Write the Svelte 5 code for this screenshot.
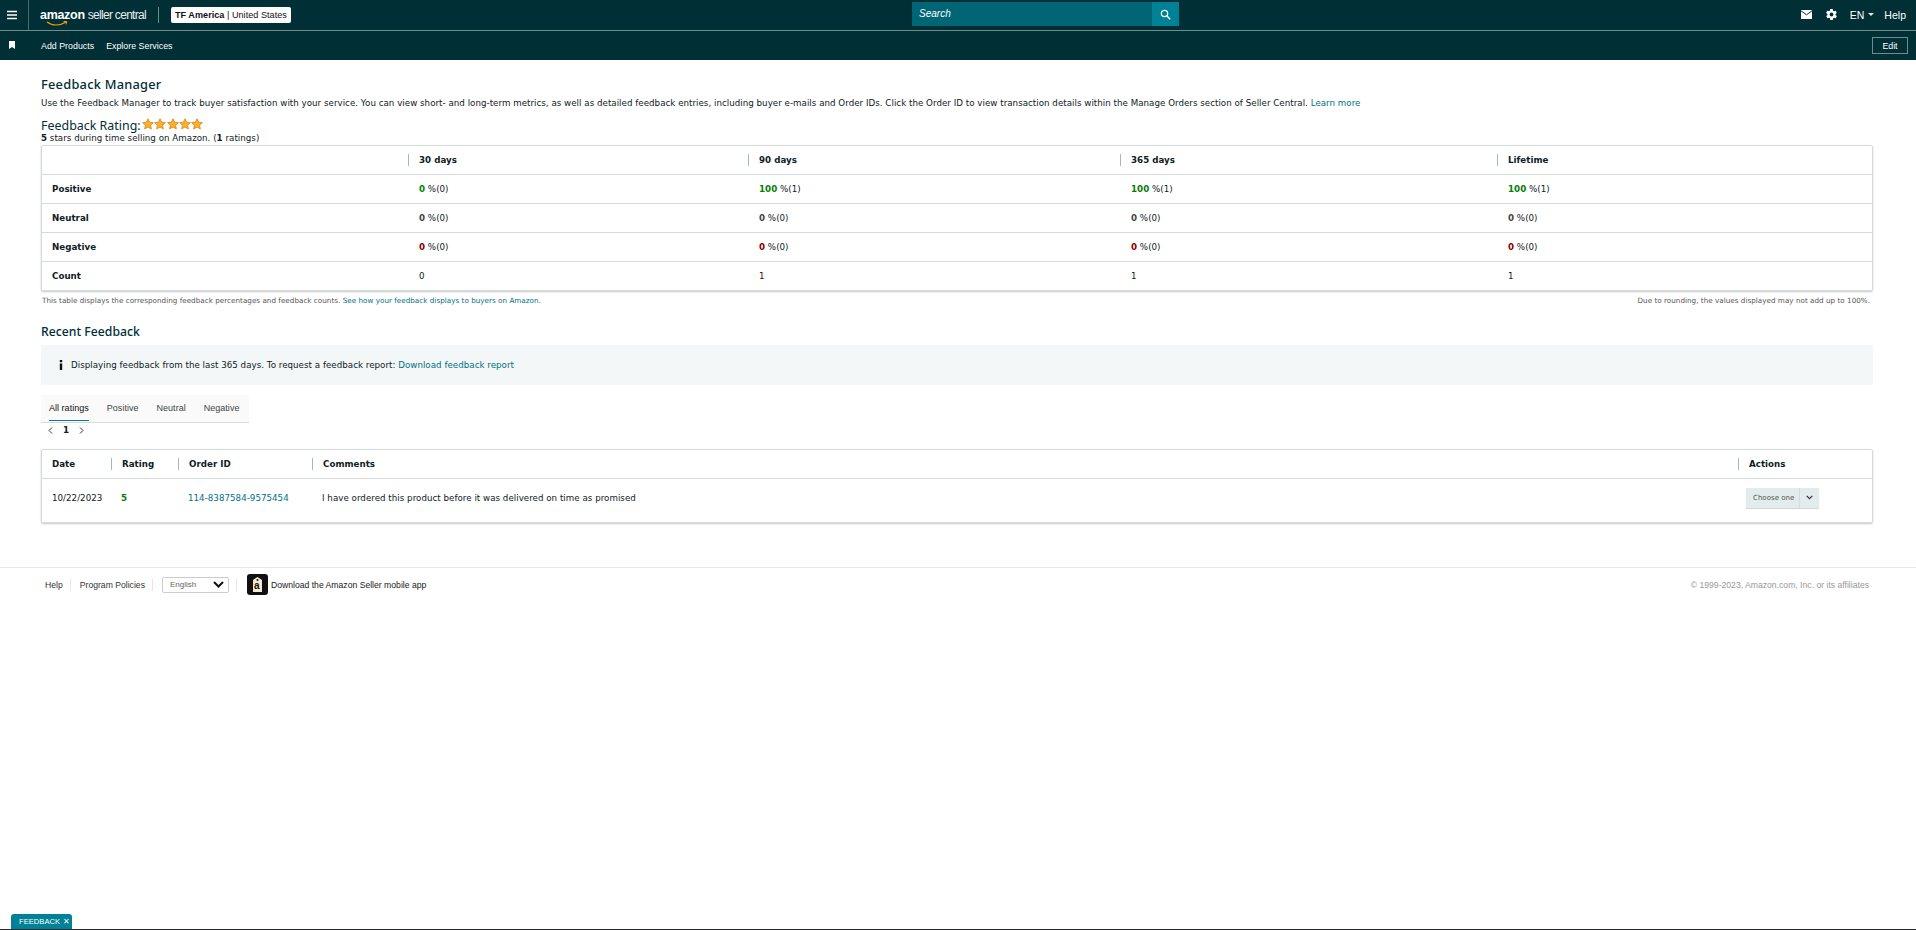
<script lang="ts">
  const summaryCols = ["30 days", "90 days", "365 days", "Lifetime"]
  const summaryRows = [
    { label: "Positive", tone: "good", values: [[0, 0], [100, 1], [100, 1], [100, 1]] },
    { label: "Neutral", tone: "flat", values: [[0, 0], [0, 0], [0, 0], [0, 0]] },
    { label: "Negative", tone: "bad", values: [[0, 0], [0, 0], [0, 0], [0, 0]] },
  ]
  const counts = [0, 1, 1, 1]
  const tabs = ["All ratings", "Positive", "Neutral", "Negative"]
</script>

<div class="page">
  <header class="nav">
    <div class="nav-top">
      <button class="burger" aria-label="menu">
        <svg width="12" height="10" viewBox="0 0 12 10"><path d="M1 1.500h10M1 5h10M1 8.500h10" stroke="#fff" stroke-width="1.300" /></svg>
      </button>
      <div class="logo">
        <span class="logo-a">amazon</span><span class="logo-b">seller central</span>
        <svg class="smile" width="22" height="6" viewBox="0 0 22 6"><path d="M1 1c5 4 13 4 19 0" fill="none" stroke="#f90" stroke-width="1.200" /><path d="M17.500 .6l3.300-.2-.8 3" fill="none" stroke="#f90" stroke-width="1" /></svg>
      </div>
      <span class="nav-sep"></span>
      <div class="account"><b>TF America</b> | United States</div>
      <div class="search">
        <span class="search-text">Search</span>
        <span class="search-btn">
          <svg width="11" height="11" viewBox="0 0 11 11"><circle cx="4.500" cy="4.500" r="3.200" fill="none" stroke="#fff" stroke-width="1.200" /><path d="M7 7l3.200 3.200" stroke="#fff" stroke-width="1.500" /></svg>
        </span>
      </div>
      <div class="nav-right">
        <svg width="11" height="9" viewBox="0 0 11 9"><path d="M0 0h11v9H0z" fill="#fff" /><path d="M0 .8l5.500 4 5.500-4" fill="none" stroke="#002f36" stroke-width="1" /></svg>
        <svg class="gear" width="13" height="13" viewBox="0 0 24 24"><path fill="#fff" d="M19.400 13c.1-.3.100-.7.100-1s0-.7-.1-1l2.100-1.600c.2-.2.200-.4.100-.6l-2-3.500c-.1-.2-.4-.3-.6-.2l-2.500 1c-.5-.4-1.100-.7-1.700-1l-.4-2.600c0-.3-.2-.5-.5-.5h-4c-.3 0-.5.200-.5.500l-.4 2.600c-.6.300-1.200.6-1.700 1l-2.500-1c-.2-.1-.5 0-.6.200l-2 3.500c-.1.200-.1.500.1.600L4.600 11c-.1.300-.1.700-.1 1s0 .7.100 1l-2.100 1.600c-.2.200-.2.400-.1.600l2 3.500c.1.200.4.300.6.200l2.500-1c.5.400 1.100.7 1.700 1l.4 2.600c0 .3.200.5.500.5h4c.3 0 .5-.2.500-.5l.4-2.600c.6-.3 1.200-.6 1.700-1l2.500 1c.2.100.5 0 .6-.2l2-3.500c.1-.2.100-.5-.1-.6zM12 15.500a3.500 3.500 0 1 1 0-7 3.500 3.500 0 0 1 0 7z" /></svg>
        <span class="lang">EN<i class="caret"></i></span>
        <span class="help">Help</span>
      </div>
    </div>
    <div class="nav-bottom">
      <svg class="bookmark" width="6" height="8" viewBox="0 0 6 8"><path d="M0 0h6v8L3 6 0 8z" fill="#fff" /></svg>
      <a class="nav-link first">Add Products</a>
      <a class="nav-link">Explore Services</a>
      <button class="edit">Edit</button>
    </div>
  </header>

  <main class="main">
    <h1>Feedback Manager</h1>
    <p class="intro">Use the Feedback Manager to track buyer satisfaction with your service. You can view short- and long-term metrics, as well as detailed feedback entries, including buyer e-mails and Order IDs. Click the Order ID to view transaction details within the Manage Orders section of Seller Central. <a>Learn more</a></p>
    <div class="rating-line">
      <span class="rating-title">Feedback Rating:</span>
      <span class="stars">
        {#each [1, 2, 3, 4, 5] as s (s)}
          <svg width="12" height="12" viewBox="0 0 24 24"><path fill="#f5b32a" stroke="#e47911" stroke-width="1.500" d="M12 1.500l3.200 6.900 7.500.9-5.500 5.100 1.500 7.400L12 18.100l-6.700 3.700 1.500-7.400L1.300 9.300l7.500-.9z" /></svg>
        {/each}
      </span>
    </div>
    <p class="rating-sub"><b>5</b> stars during time selling on Amazon. (<b>1</b> ratings)</p>

    <div class="card summary">
      <div class="row head">
        <div></div>
        {#each summaryCols as c (c)}
          <div class="cell"><span class="th">{c}</span></div>
        {/each}
      </div>
      {#each summaryRows as r (r.label)}
        <div class="row">
          <div class="row-label">{r.label}</div>
          {#each r.values as v, i (i)}
            <div class="cell"><b class={r.tone}>{v[0]}</b> %({v[1]})</div>
          {/each}
        </div>
      {/each}
      <div class="row">
        <div class="row-label">Count</div>
        {#each counts as c, i (i)}
          <div class="cell">{c}</div>
        {/each}
      </div>
    </div>
    <div class="notes">
      <span>This table displays the corresponding feedback percentages and feedback counts. <a>See how your feedback displays to buyers on Amazon.</a></span>
      <span>Due to rounding, the values displayed may not add up to 100%.</span>
    </div>

    <h2>Recent Feedback</h2>
    <div class="alert">
      <svg width="4" height="10" viewBox="0 0 4 10"><path d="M.8 0h2.400v2.200H.8zM.8 3.500h2.400V10H.8z" fill="#0f1111" /></svg>
      <span>Displaying feedback from the last 365 days. To request a feedback report: <a>Download feedback report</a></span>
    </div>

    <div class="tabs">
      {#each tabs as t, i (t)}
        <span class="tab" class:active={i === 0}>{t}</span>
      {/each}
    </div>
    <div class="pager">
      <svg width="5" height="7" viewBox="0 0 5 7"><path d="M4 .5L1 3.500l3 3" fill="none" stroke="#333" /></svg>
      <span>1</span>
      <svg width="5" height="7" viewBox="0 0 5 7"><path d="M1 .5l3 3-3 3" fill="none" stroke="#333" /></svg>
    </div>

    <div class="card recent">
      <div class="rrow rhead">
        <div class="rcell first">Date</div>
        <div class="rcell"><span class="th">Rating</span></div>
        <div class="rcell"><span class="th">Order ID</span></div>
        <div class="rcell"><span class="th">Comments</span></div>
        <div class="rcell"><span class="th">Actions</span></div>
      </div>
      <div class="rrow rbody">
        <div class="rcell first">10/22/2023</div>
        <div class="rcell"><b class="good score">5</b></div>
        <div class="rcell"><a>114-8387584-9575454</a></div>
        <div class="rcell">I have ordered this product before it was delivered on time as promised</div>
        <div class="rcell">
          <div class="choose">
            <span class="choose-text">Choose one</span>
            <span class="choose-arrow">
              <svg width="7" height="5" viewBox="0 0 7 5"><path d="M.7 .8l2.800 2.800L6.300 .8" fill="none" stroke="#333" stroke-width="1.200" /></svg>
            </span>
          </div>
        </div>
      </div>
    </div>
  </main>

  <footer class="footer">
    <div class="foot-left">
      <a class="foot-link">Help</a>
      <a class="foot-link">Program Policies</a>
      <div class="lang-select">
        <span>English</span>
        <svg width="11" height="7" viewBox="0 0 11 7"><path d="M1 1l4.500 4.500L10 1" fill="none" stroke="#111" stroke-width="2" /></svg>
      </div>
      <span class="foot-sep"></span>
      <div class="app-icon">
        <svg width="21" height="21" viewBox="0 0 21 21"><rect width="21" height="21" rx="3" fill="#111" /><path d="M6 6l4.500-3L15 6v12H6z" fill="#f4ead0" /><circle cx="10.500" cy="6" r="1" fill="#111" /></svg>
        <span class="app-a">a</span>
      </div>
      <span class="app-text">Download the Amazon Seller mobile app</span>
    </div>
    <span class="copy">© 1999-2023, Amazon.com, Inc. or its affiliates</span>
  </footer>

  <div class="feedback-tab">FEEDBACK <span class="x">✕</span></div>
  <div class="bottom-line"></div>
</div>

<style>
  :global(body) {
    margin: 0;
    background: #fff;
  }
  .page {
    min-height: 930px;
    font-family: "DejaVu Sans", sans-serif;
    font-size: 8.7px;
    letter-spacing: 0.025px;
    color: #0f2024;
    overflow: hidden;
  }
  a {
    color: #007185;
    cursor: pointer;
  }
  b {
    font-weight: 700;
  }

  .nav {
    background: #002f36;
    color: #fff;
    font-family: "Liberation Sans", sans-serif;
  }
  .nav-top {
    height: 31px;
    box-sizing: border-box;
    display: flex;
    align-items: center;
    border-bottom: 1px solid #6f8b8b;
    padding-bottom: 1px;
    position: relative;
  }
  .burger {
    width: 29px;
    height: 30px;
    padding: 0 4px 0 0;
    box-sizing: border-box;
    background: none;
    border: 0;
    border-right: 1px solid #4a6a6e;
    display: flex;
    align-items: center;
    justify-content: center;
    flex: none;
  }
  .logo {
    margin-left: 11px;
    position: relative;
    display: flex;
    align-items: baseline;
    gap: 3px;
    white-space: nowrap;
  }
  .logo-a {
    font-size: 12.5px;
    font-weight: 700;
    letter-spacing: -0.3px;
  }
  .logo-b {
    font-size: 12px;
    letter-spacing: -0.7px;
    color: #e6eded;
  }
  .smile {
    position: absolute;
    left: 6px;
    top: 13px;
  }
  .nav-sep {
    width: 1px;
    height: 16px;
    background: #6f8b8b;
    margin: 0 12px;
  }
  .account {
    background: #fff;
    color: #111;
    border-radius: 2px;
    height: 16px;
    line-height: 16px;
    padding: 0 4px;
    font-size: 9.1px;
    white-space: nowrap;
  }
  .search {
    position: absolute;
    left: 912px;
    top: 2px;
    width: 267px;
    height: 24px;
    background: #006574;
    display: flex;
    justify-content: space-between;
    align-items: center;
    font-size: 10px;
    font-style: italic;
  }
  .search-text {
    padding: 0 0 2px 7px;
  }
  .search-btn {
    width: 27px;
    height: 24px;
    background: #008296;
    display: flex;
    align-items: center;
    justify-content: center;
  }
  .nav-right {
    margin-left: auto;
    display: flex;
    align-items: center;
    padding-right: 10px;
    font-size: 10.5px;
  }
  .gear {
    margin-left: 13px;
  }
  .lang {
    margin-left: 12px;
    display: flex;
    align-items: center;
  }
  .caret {
    width: 0;
    height: 0;
    border: 3px solid transparent;
    border-top: 3px solid #dfe6e6;
    border-bottom: 0;
    margin-left: 4px;
  }
  .help {
    margin-left: 10px;
  }
  .nav-bottom {
    height: 29px;
    box-sizing: border-box;
    display: flex;
    align-items: center;
    padding: 1px 8px 0 9px;
    font-size: 8.8px;
  }
  .bookmark {
    margin-top: -2px;
  }
  .nav-link {
    color: #fff;
    margin-right: 12px;
  }
  .nav-link.first {
    margin-left: 26px;
  }
  .edit {
    margin-left: auto;
    width: 36px;
    height: 17px;
    padding: 0;
    margin-top: -1px;
    background: none;
    border: 1px solid #6f8b8b;
    color: #fff;
    font: inherit;
  }

  .main {
    padding: 15px 43px 0 41px;
  }
  h1 {
    margin: 0;
    font-family: "Noto Sans", sans-serif;
    font-size: 12.8px;
    line-height: 19px;
    font-weight: 500;
    color: #002f36;
    letter-spacing: 0.25px;
  }
  .intro {
    margin: 2px 0 0;
    line-height: 14px;
    white-space: nowrap;
  }
  .rating-line {
    margin: 8px 0 0;
    height: 15px;
    display: flex;
    align-items: center;
    gap: 1px;
  }
  .rating-title {
    font-family: "Noto Sans", sans-serif;
    font-size: 12.4px;
    color: #002f36;
  }
  .stars {
    display: flex;
    gap: 0.4px;
    margin-top: -4px;
  }
  .rating-sub {
    margin: 0;
    line-height: 11px;
  }
  .card {
    border: 1px solid #d5dbdb;
    box-shadow: 0 1px 2px rgba(0, 0, 0, 0.22);
    border-radius: 2px;
  }
  .summary {
    margin-top: 1px;
  }
  .row {
    display: grid;
    grid-template-columns: 366px 340px 372px 377px 1fr;
    height: 29px;
    box-sizing: border-box;
    align-items: center;
    border-top: 1px solid #d5dbdb;
  }
  .row.head {
    border-top: 0;
    height: 28px;
  }
  .row-label {
    padding-left: 10px;
    font-weight: 700;
  }
  .cell {
    padding-left: 11px;
  }
  .head .cell {
    padding-left: 0;
  }
  .th {
    display: inline-block;
    border-left: 1px solid #aab7b8;
    padding-left: 10px;
    font-weight: 700;
    line-height: 12px;
  }
  .good {
    color: #067d06;
  }
  .flat {
    color: #444;
  }
  .bad {
    color: #8b0000;
  }
  .notes {
    display: flex;
    justify-content: space-between;
    margin: 4px 3px 0 1px;
    font-size: 7.2px;
    line-height: 12px;
    color: #555;
  }
  h2 {
    margin: 17px 0 0;
    font-family: "Noto Sans", sans-serif;
    font-size: 12.2px;
    line-height: 16px;
    font-weight: 500;
    color: #002f36;
  }
  .alert {
    margin-top: 5px;
    height: 40px;
    background: #f3f7f7;
    display: flex;
    align-items: center;
    gap: 8px;
    padding-left: 18px;
  }
  .tabs {
    margin-top: 10px;
    width: 208px;
    height: 28px;
    padding-left: 8px;
    box-sizing: border-box;
    background: #fafafa;
    border-bottom: 1px solid #d5dbdb;
    display: flex;
    gap: 18px;
    font-size: 9px;
    font-family: "Liberation Sans", sans-serif;
    color: #444;
    white-space: nowrap;
  }
  .tab {
    line-height: 27px;
    height: 26px;
  }
  .tab.active {
    color: #111;
    border-bottom: 1px solid #008296;
    height: 25px;
  }
  .pager {
    padding-left: 7px;
    height: 14px;
    display: flex;
    align-items: center;
    gap: 10px;
    font-weight: 700;
  }
  .recent {
    margin-top: 12px;
  }
  .rrow {
    display: grid;
    grid-template-columns: 69px 67px 134px 1426px 1fr;
    align-items: center;
    white-space: nowrap;
  }
  .rhead {
    height: 29px;
    box-sizing: border-box;
    border-bottom: 1px solid #d5dbdb;
    font-weight: 700;
  }
  .rbody {
    height: 43px;
    padding-bottom: 6px;
    box-sizing: border-box;
  }
  .rcell.first {
    padding-left: 10px;
  }
  .rbody .rcell:nth-child(n + 2) {
    padding-left: 10px;
  }
  .choose {
    display: flex;
    width: 73px;
    height: 20px;
    margin-left: -2px;
    background: #e3ecec;
    border-radius: 1px;
    box-shadow: 0 1px 1px rgba(0, 0, 0, 0.18);
    font-size: 7px;
    color: #555;
    align-items: center;
  }
  .choose-text {
    padding-left: 7px;
    line-height: 20px;
    border-right: 1px solid #d5dbdb;
    width: 46px;
  }
  .choose-arrow {
    flex: 1;
    display: flex;
    justify-content: center;
  }

  .footer {
    margin-top: 44px;
    border-top: 1px solid #e7e7e7;
    height: 40px;
    display: flex;
    align-items: center;
    justify-content: space-between;
    padding: 0 47px 6px 45px;
    font-family: "Liberation Sans", sans-serif;
    font-size: 8.65px;
    letter-spacing: 0;
    color: #444;
    box-sizing: border-box;
  }
  .foot-left {
    display: flex;
    align-items: center;
  }
  .foot-link {
    color: #333;
    padding-right: 7px;
    margin-right: 9px;
    border-right: 1px solid #e7e7e7;
    line-height: 12px;
  }
  .lang-select {
    width: 67px;
    height: 16px;
    box-sizing: border-box;
    border: 1px solid #ccc;
    border-radius: 2px;
    display: flex;
    align-items: center;
    justify-content: space-between;
    padding: 0 4px 0 7px;
    font-size: 8px;
    color: #666;
  }
  .foot-sep {
    width: 1px;
    height: 14px;
    background: #e7e7e7;
    margin: 0 10px 0 7px;
  }
  .app-icon {
    position: relative;
    width: 21px;
    height: 21px;
  }
  .app-a {
    position: absolute;
    left: 7px;
    top: 6px;
    font-size: 10px;
    font-weight: 700;
    color: #111;
    line-height: 12px;
  }
  .app-text {
    margin-left: 3px;
    color: #222;
  }
  .copy {
    color: #999;
  }
  .feedback-tab {
    position: fixed;
    left: 11px;
    bottom: 1px;
    width: 61px;
    height: 15px;
    box-sizing: border-box;
    background: #008296;
    color: #fff;
    border-radius: 3px 3px 0 0;
    font-family: "Liberation Sans", sans-serif;
    font-size: 7.6px;
    line-height: 16px;
    padding-left: 8px;
    white-space: nowrap;
  }
  .x {
    margin-left: 1px;
  }
  .bottom-line {
    position: fixed;
    left: 0;
    right: 0;
    bottom: 0;
    height: 1px;
    background: #2b2b33;
  }
</style>
